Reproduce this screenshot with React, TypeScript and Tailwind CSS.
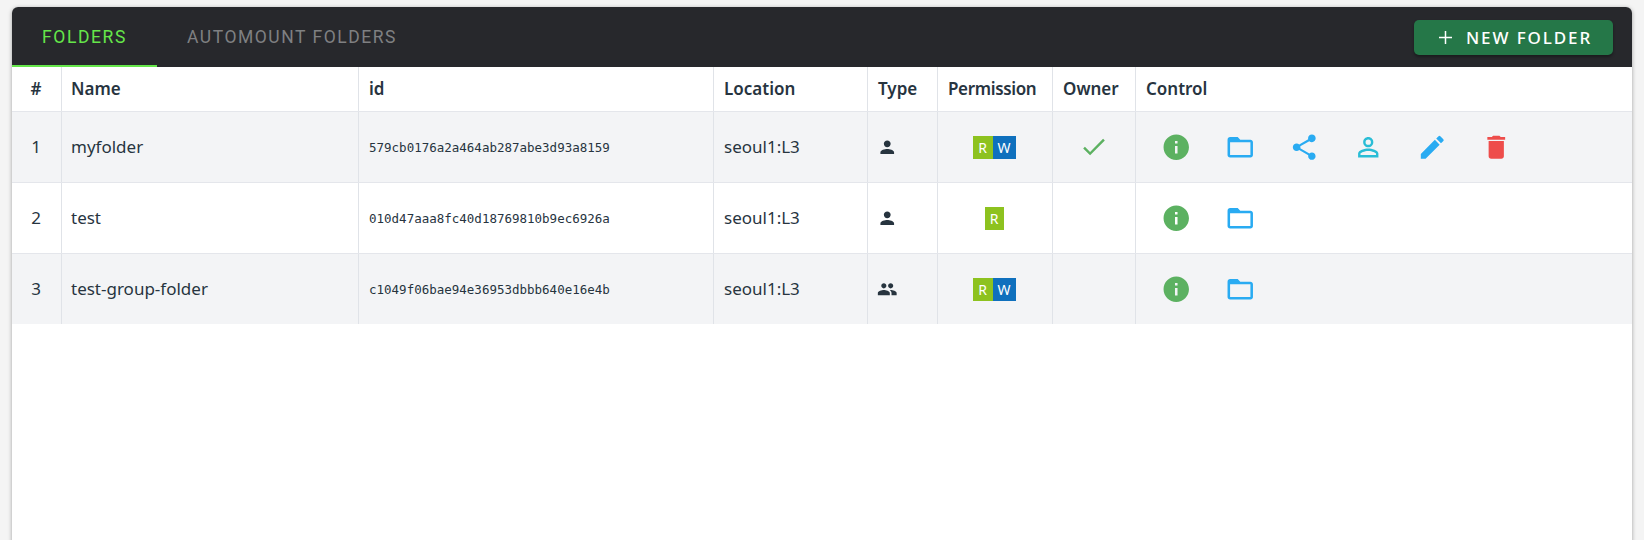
import type { ReactNode } from "react";
import { MdCheck, MdCreate, MdDelete, MdInfo, MdPeople, MdPermIdentity, MdPerson, MdShare } from "react-icons/md";

type Folder = {
  name: string;
  id: string;
  host: string;
  group?: boolean;
  permissions: string[];
  owner?: boolean;
  height: string;
};

const folders: Folder[] = [
  { name: "myfolder", id: "579cb0176a2a464ab287abe3d93a8159", host: "seoul1:L3", permissions: ["R", "W"], owner: true, height: "h-[71px] border-b bg-[#f3f4f6]" },
  { name: "test", id: "010d47aaa8fc40d18769810b9ec6926a", host: "seoul1:L3", permissions: ["R"], height: "h-[71px] border-b bg-white" },
  { name: "test-group-folder", id: "c1049f06bae94e36953dbbb640e16e4b", host: "seoul1:L3", group: true, permissions: ["R", "W"], height: "h-[70px] bg-[#f3f4f6]" },
];

const columns = "grid grid-cols-[50px_297px_355px_154px_70px_115px_83px_1fr]";

function Cell({ children, className = "" }: { children?: ReactNode; className?: string }) {
  return <div className={`flex items-center border-r border-[#e0e3e8] px-2.5 whitespace-nowrap last:border-r-0 ${className}`}>{children}</div>;
}

function Badge({ kind }: { kind: string }) {
  return kind === "R" ? (
    <span className="flex h-[23px] w-5 items-center justify-center bg-[#8dc21f] only:w-[19px]">R</span>
  ) : (
    <span className="flex h-[23px] w-[23px] items-center justify-center bg-[#0f70bd]">W</span>
  );
}

function FolderIcon() {
  return (
    <svg viewBox="0 0 24 24" className="h-[1em] w-[1em]" fill="currentColor">
      <path d="M20 6h-8l-2-2H4c-1.1 0-2 .9-2 2v12c0 1.1.9 2 2 2h16c1.1 0 2-.9 2-2V8c0-1.1-.9-2-2-2zm0 12H4V8h16v10z" />
    </svg>
  );
}

function Action({ children, className }: { children: ReactNode; className: string }) {
  return <button className={`flex h-16 w-16 items-center justify-center text-[30.5px] ${className}`}>{children}</button>;
}

export default function App() {
  return (
    <div className="h-[540px] overflow-hidden bg-[#f4f4f4] px-3 pt-[7px] font-['Noto_Sans',sans-serif] text-[#27343f]">
      <div className="h-[560px] overflow-hidden rounded-[6px] bg-white shadow-[0_1px_4px_rgba(0,0,0,0.35)]">
        <div className="flex h-[60px] items-stretch bg-[#27282c] pr-[19px] font-[Roboto,sans-serif] text-[17.5px]">
          <div className="flex w-[145px] items-center justify-center border-b-2 border-[#65e64a] pt-0.5 tracking-[1.6px] text-[#65e64a]">FOLDERS</div>
          <div className="flex items-center border-b-2 border-transparent pt-0.5 pl-[30px] tracking-[1.53px] text-[#7f8082]">AUTOMOUNT FOLDERS</div>
          <button className="mt-[13px] ml-auto flex h-[35px] w-[199px] items-center rounded-[5px] bg-[#257748] pl-[25px] text-white shadow-[0_2px_3px_rgba(0,0,0,0.35)]">
            <svg viewBox="0 0 13 13" className="-mt-px h-[13px] w-[13px]" stroke="currentColor" strokeWidth="1.5" fill="none">
              <path d="M6.5 0v13M0 6.5h13" />
            </svg>
            <span className="ml-3.5 font-['Noto_Sans',sans-serif] text-[17px] font-medium tracking-[1.9px]">NEW FOLDER</span>
          </button>
        </div>
        <div className={`${columns} h-[45px] border-b border-[#e4e6eb] text-[17px] font-semibold`}>
          <Cell className="justify-center pr-[11px]">#</Cell>
          <Cell className="pl-[9px]">Name</Cell>
          <Cell>id</Cell>
          <Cell>Location</Cell>
          <Cell>Type</Cell>
          <Cell className="tracking-[-0.35px]">Permission</Cell>
          <Cell>Owner</Cell>
          <Cell>Control</Cell>
        </div>
        {folders.map((f, i) => (
          <div key={f.id} className={`${columns} ${f.height} border-[#e4e6eb] text-[17px]`}>
            <Cell className="justify-center pr-[11px]">{i + 1}</Cell>
            <Cell className="pl-[9px]">{f.name}</Cell>
            <Cell className="pt-0.5 font-['DejaVu_Sans_Mono',monospace] text-[12.5px]">{f.id}</Cell>
            <Cell>{f.host}</Cell>
            <Cell className="pl-[9px] text-[20.5px]">{f.group ? <MdPeople /> : <MdPerson />}</Cell>
            <Cell className="justify-center pr-3 text-[14px] text-white">
              {f.permissions.map((p) => <Badge key={p} kind={p} />)}
            </Cell>
            <Cell className="justify-center text-[29.5px] text-[#5cb161]">{f.owner && <MdCheck />}</Cell>
            <Cell>
              <Action className="-ml-0.5 text-[#5cb161]"><MdInfo /></Action>
              <Action className="text-[#29abf2]"><FolderIcon /></Action>
              {f.owner && (
                <>
                  <Action className="text-[#29abf2]"><MdShare /></Action>
                  <Action className="text-[#29bdd6]"><MdPermIdentity /></Action>
                  <Action className="text-[#29abf2]"><MdCreate /></Action>
                  <Action className="text-[#ee4d4b]"><MdDelete /></Action>
                </>
              )}
            </Cell>
          </div>
        ))}
      </div>
    </div>
  );
}
